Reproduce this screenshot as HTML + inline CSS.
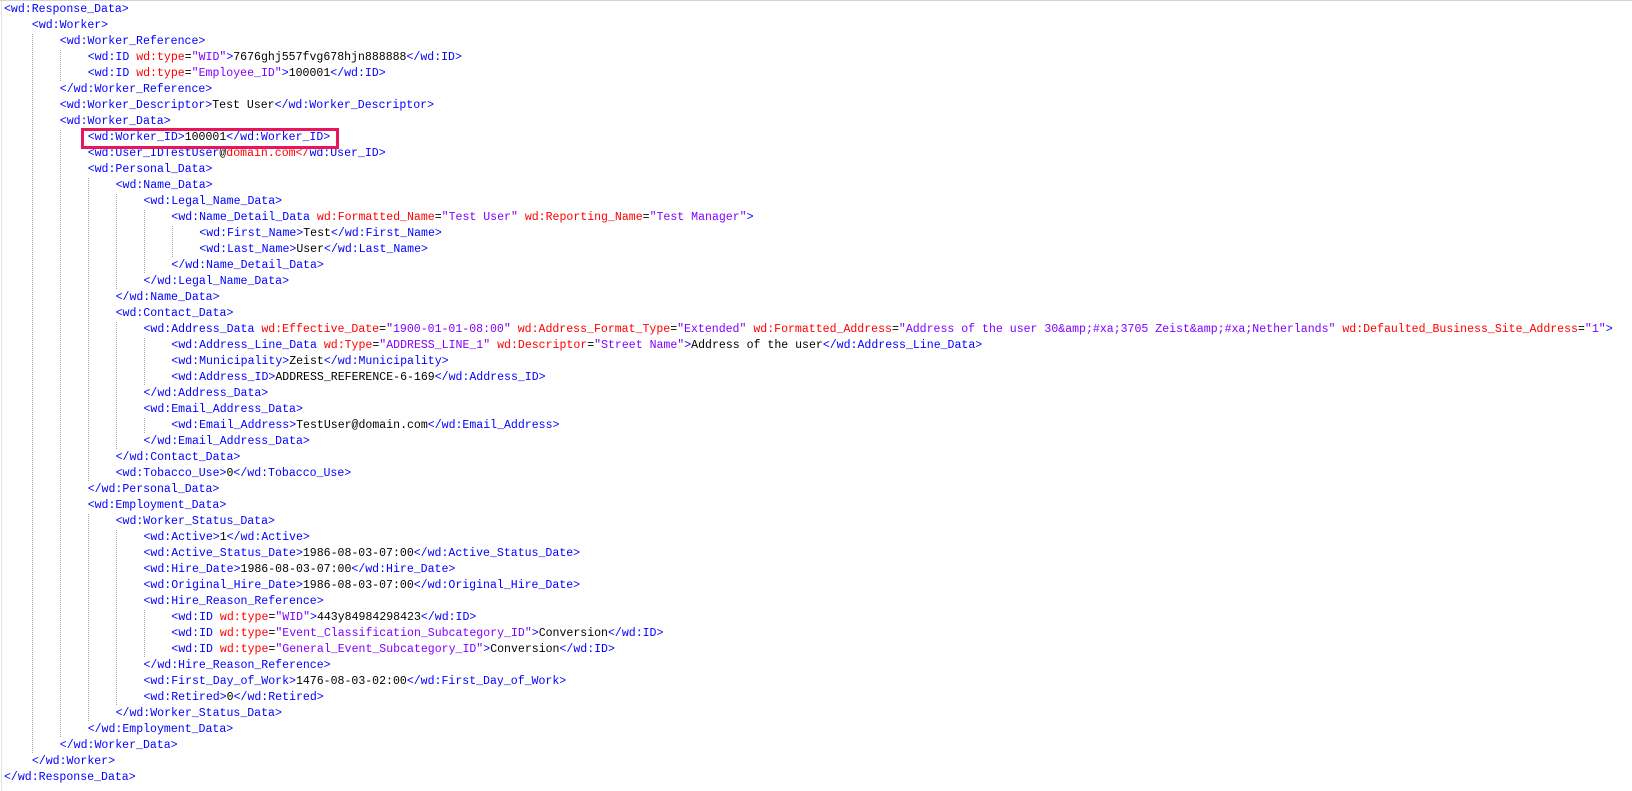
<!DOCTYPE html>
<html><head><meta charset="utf-8"><style>
html,body{margin:0;padding:0;background:#fff;width:1632px;height:790px;overflow:hidden}
#ed{position:absolute;left:0;top:0;width:1632px;height:790px;border-top:1px solid #d4d4d4;box-sizing:border-box}
#lb{position:absolute;left:1px;top:0;width:1px;height:790px;background:#e4e4e4}
.l{position:relative;height:16px;line-height:16px;white-space:pre;font-family:"Liberation Mono",monospace;font-size:11.55px;color:#000;
background-repeat:no-repeat;background-size:1px 100%;
background-image:repeating-linear-gradient(to bottom,#a8a8a8 0 1px,transparent 1px 2px),repeating-linear-gradient(to bottom,#a8a8a8 0 1px,transparent 1px 2px),repeating-linear-gradient(to bottom,#a8a8a8 0 1px,transparent 1px 2px),repeating-linear-gradient(to bottom,#a8a8a8 0 1px,transparent 1px 2px),repeating-linear-gradient(to bottom,#a8a8a8 0 1px,transparent 1px 2px),repeating-linear-gradient(to bottom,#a8a8a8 0 1px,transparent 1px 2px);
background-position:-10px 0,-10px 0,-10px 0,-10px 0,-10px 0,-10px 0}
.d0{padding-left:4px}.d1{padding-left:31.9px}.d2{padding-left:59.8px}.d3{padding-left:87.7px}.d4{padding-left:115.6px}.d5{padding-left:143.5px}.d6{padding-left:171.4px}.d7{padding-left:199.3px}
.d2{background-position:32px 0,-10px 0,-10px 0,-10px 0,-10px 0,-10px 0}
.d3{background-position:32px 0,60px 0,-10px 0,-10px 0,-10px 0,-10px 0}
.d4{background-position:32px 0,60px 0,88px 0,-10px 0,-10px 0,-10px 0}
.d5{background-position:32px 0,60px 0,88px 0,116px 0,-10px 0,-10px 0}
.d6{background-position:32px 0,60px 0,88px 0,116px 0,144px 0,-10px 0}
.d7{background-position:32px 0,60px 0,88px 0,116px 0,144px 0,172px 0}
.t{color:#0000ff}.a{color:#ff0000}.v{color:#8000ff}
#box{position:absolute;left:81px;top:127px;width:252px;height:15px;border:3px solid #e8175d}
#lines{position:absolute;left:0;top:0.5px}
</style></head><body><div id="ed"><div id="lb"></div><div id="lines">
<div class="l d0"><span class="t">&lt;wd:Response_Data&gt;</span></div>
<div class="l d1"><span class="t">&lt;wd:Worker&gt;</span></div>
<div class="l d2"><span class="t">&lt;wd:Worker_Reference&gt;</span></div>
<div class="l d3"><span class="t">&lt;wd:ID </span><span class="a">wd:type</span>=<span class="v">"WID"</span><span class="t">&gt;</span>7676ghj557fvg678hjn888888<span class="t">&lt;/wd:ID&gt;</span></div>
<div class="l d3"><span class="t">&lt;wd:ID </span><span class="a">wd:type</span>=<span class="v">"Employee_ID"</span><span class="t">&gt;</span>100001<span class="t">&lt;/wd:ID&gt;</span></div>
<div class="l d2"><span class="t">&lt;/wd:Worker_Reference&gt;</span></div>
<div class="l d2"><span class="t">&lt;wd:Worker_Descriptor&gt;</span>Test User<span class="t">&lt;/wd:Worker_Descriptor&gt;</span></div>
<div class="l d2"><span class="t">&lt;wd:Worker_Data&gt;</span></div>
<div class="l d3"><span class="t">&lt;wd:Worker_ID&gt;</span>100001<span class="t">&lt;/wd:Worker_ID&gt;</span></div>
<div class="l d3"><span class="t">&lt;wd:User_IDTestUser</span>@<span class="a">domain.com&lt;/</span><span class="t">wd:User_ID&gt;</span></div>
<div class="l d3"><span class="t">&lt;wd:Personal_Data&gt;</span></div>
<div class="l d4"><span class="t">&lt;wd:Name_Data&gt;</span></div>
<div class="l d5"><span class="t">&lt;wd:Legal_Name_Data&gt;</span></div>
<div class="l d6"><span class="t">&lt;wd:Name_Detail_Data </span><span class="a">wd:Formatted_Name</span>=<span class="v">"Test User"</span> <span class="a">wd:Reporting_Name</span>=<span class="v">"Test Manager"</span><span class="t">&gt;</span></div>
<div class="l d7"><span class="t">&lt;wd:First_Name&gt;</span>Test<span class="t">&lt;/wd:First_Name&gt;</span></div>
<div class="l d7"><span class="t">&lt;wd:Last_Name&gt;</span>User<span class="t">&lt;/wd:Last_Name&gt;</span></div>
<div class="l d6"><span class="t">&lt;/wd:Name_Detail_Data&gt;</span></div>
<div class="l d5"><span class="t">&lt;/wd:Legal_Name_Data&gt;</span></div>
<div class="l d4"><span class="t">&lt;/wd:Name_Data&gt;</span></div>
<div class="l d4"><span class="t">&lt;wd:Contact_Data&gt;</span></div>
<div class="l d5"><span class="t">&lt;wd:Address_Data </span><span class="a">wd:Effective_Date</span>=<span class="v">"1900-01-01-08:00"</span> <span class="a">wd:Address_Format_Type</span>=<span class="v">"Extended"</span> <span class="a">wd:Formatted_Address</span>=<span class="v">"Address of the user 30&amp;amp;#xa;3705 Zeist&amp;amp;#xa;Netherlands"</span> <span class="a">wd:Defaulted_Business_Site_Address</span>=<span class="v">"1"</span><span class="t">&gt;</span></div>
<div class="l d6"><span class="t">&lt;wd:Address_Line_Data </span><span class="a">wd:Type</span>=<span class="v">"ADDRESS_LINE_1"</span> <span class="a">wd:Descriptor</span>=<span class="v">"Street Name"</span><span class="t">&gt;</span>Address of the user<span class="t">&lt;/wd:Address_Line_Data&gt;</span></div>
<div class="l d6"><span class="t">&lt;wd:Municipality&gt;</span>Zeist<span class="t">&lt;/wd:Municipality&gt;</span></div>
<div class="l d6"><span class="t">&lt;wd:Address_ID&gt;</span>ADDRESS_REFERENCE-6-169<span class="t">&lt;/wd:Address_ID&gt;</span></div>
<div class="l d5"><span class="t">&lt;/wd:Address_Data&gt;</span></div>
<div class="l d5"><span class="t">&lt;wd:Email_Address_Data&gt;</span></div>
<div class="l d6"><span class="t">&lt;wd:Email_Address&gt;</span>TestUser@domain.com<span class="t">&lt;/wd:Email_Address&gt;</span></div>
<div class="l d5"><span class="t">&lt;/wd:Email_Address_Data&gt;</span></div>
<div class="l d4"><span class="t">&lt;/wd:Contact_Data&gt;</span></div>
<div class="l d4"><span class="t">&lt;wd:Tobacco_Use&gt;</span>0<span class="t">&lt;/wd:Tobacco_Use&gt;</span></div>
<div class="l d3"><span class="t">&lt;/wd:Personal_Data&gt;</span></div>
<div class="l d3"><span class="t">&lt;wd:Employment_Data&gt;</span></div>
<div class="l d4"><span class="t">&lt;wd:Worker_Status_Data&gt;</span></div>
<div class="l d5"><span class="t">&lt;wd:Active&gt;</span>1<span class="t">&lt;/wd:Active&gt;</span></div>
<div class="l d5"><span class="t">&lt;wd:Active_Status_Date&gt;</span>1986-08-03-07:00<span class="t">&lt;/wd:Active_Status_Date&gt;</span></div>
<div class="l d5"><span class="t">&lt;wd:Hire_Date&gt;</span>1986-08-03-07:00<span class="t">&lt;/wd:Hire_Date&gt;</span></div>
<div class="l d5"><span class="t">&lt;wd:Original_Hire_Date&gt;</span>1986-08-03-07:00<span class="t">&lt;/wd:Original_Hire_Date&gt;</span></div>
<div class="l d5"><span class="t">&lt;wd:Hire_Reason_Reference&gt;</span></div>
<div class="l d6"><span class="t">&lt;wd:ID </span><span class="a">wd:type</span>=<span class="v">"WID"</span><span class="t">&gt;</span>443y84984298423<span class="t">&lt;/wd:ID&gt;</span></div>
<div class="l d6"><span class="t">&lt;wd:ID </span><span class="a">wd:type</span>=<span class="v">"Event_Classification_Subcategory_ID"</span><span class="t">&gt;</span>Conversion<span class="t">&lt;/wd:ID&gt;</span></div>
<div class="l d6"><span class="t">&lt;wd:ID </span><span class="a">wd:type</span>=<span class="v">"General_Event_Subcategory_ID"</span><span class="t">&gt;</span>Conversion<span class="t">&lt;/wd:ID&gt;</span></div>
<div class="l d5"><span class="t">&lt;/wd:Hire_Reason_Reference&gt;</span></div>
<div class="l d5"><span class="t">&lt;wd:First_Day_of_Work&gt;</span>1476-08-03-02:00<span class="t">&lt;/wd:First_Day_of_Work&gt;</span></div>
<div class="l d5"><span class="t">&lt;wd:Retired&gt;</span>0<span class="t">&lt;/wd:Retired&gt;</span></div>
<div class="l d4"><span class="t">&lt;/wd:Worker_Status_Data&gt;</span></div>
<div class="l d3"><span class="t">&lt;/wd:Employment_Data&gt;</span></div>
<div class="l d2"><span class="t">&lt;/wd:Worker_Data&gt;</span></div>
<div class="l d1"><span class="t">&lt;/wd:Worker&gt;</span></div>
<div class="l d0"><span class="t">&lt;/wd:Response_Data&gt;</span></div>
</div><div id="box"></div></div></body></html>
